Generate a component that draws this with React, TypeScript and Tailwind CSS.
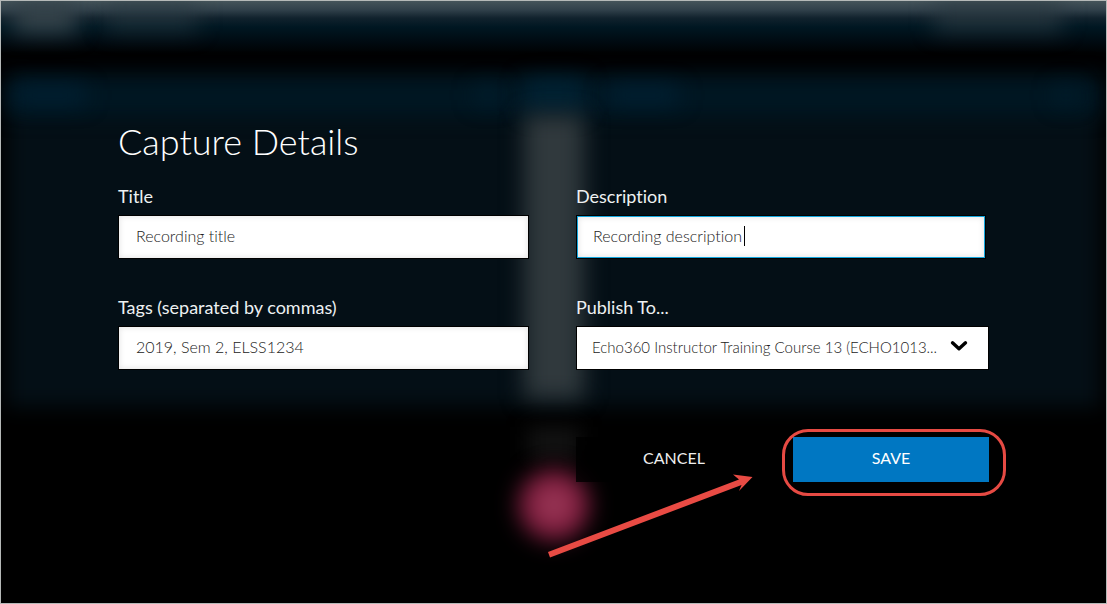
import { useState } from "react";
import type { FormEvent, ReactNode } from "react";

const COURSES = ["Echo360 Instructor Training Course 13 (ECHO1013..."];

const inputClass =
  "block h-[44px] w-full max-w-[411px] border border-black bg-white px-[17px] pb-[3px] text-base font-light text-[#222] shadow-[inset_0_0_6px_rgba(0,0,0,0.12)] outline-none";

function Field({ id, label, children }: { id: string; label: string; children: ReactNode }) {
  return (
    <div>
      <label htmlFor={id} className="mb-2 block text-lg leading-[22px] text-[#eef1f2]">
        {label}
      </label>
      {children}
    </div>
  );
}

// Dimmed and blurred capture screen that sits behind the form
function Backdrop() {
  return (
    <div aria-hidden="true" className="absolute inset-0 flex flex-col overflow-hidden">
      <div className="flex h-[74px] items-start gap-7 bg-[linear-gradient(to_bottom,#45545a_0px,#30404a_9px,#11222d_17px,#001722_26px,#000b12_40px,#000203_52px,#000203_66px)] px-3">
        <div className="h-[32px] w-[64px] bg-[#35434a] blur-[11px]" />
        <div className="h-[30px] w-[92px] bg-[#2a3a42]/60 blur-[11px]" />
        <div className="mr-8 ml-auto h-[30px] w-[128px] bg-[#2b3a42]/75 blur-[11px]" />
      </div>
      <div className="relative mx-[6px] grid h-[332px] grid-cols-[1fr_60px_1fr] grid-rows-[40px_1fr]">
        <div className="absolute inset-0 bg-[#040f16] blur-[10px]" />
        <div className="col-span-3 col-start-1 row-start-1 mt-1 bg-[#001723] blur-[10px]" />
        <div className="relative col-start-1 row-start-1 flex items-center justify-between px-2 blur-[11px]">
          <div className="h-4 w-[70px] bg-[#002236]" />
          <div className="mr-4 h-4 w-6 bg-[#002030]" />
        </div>
        <div className="relative col-start-2 row-start-1 my-1 bg-[#002233] blur-[11px]" />
        <div className="relative col-start-3 row-start-1 flex items-center justify-between px-6 blur-[11px]">
          <div className="h-4 w-[70px] bg-[#002236]" />
          <div className="h-4 w-5 bg-[#002030]" />
        </div>
        <div className="relative col-start-2 row-start-2 mb-2 bg-[#30393d] blur-[11px]" />
      </div>
      <div className="mx-auto mt-5 h-8 w-[52px] bg-[#121212] blur-[10px]" />
      <div className="mx-auto mt-[10px] h-[72px] w-[72px] rounded-full bg-[radial-gradient(closest-side,#a54c66_0%,#8c2648_45%,#761838_100%)] blur-[11px]" />
    </div>
  );
}

export default function App() {
  const [title, setTitle] = useState("Recording title");
  const [description, setDescription] = useState("Recording description");
  const [tags, setTags] = useState("2019, Sem 2, ELSS1234");
  const [course, setCourse] = useState(COURSES[0]);

  const onSubmit = (e: FormEvent) => e.preventDefault();

  return (
    <div className="relative min-h-screen border border-[#b5b9b8] bg-black font-['Lato',sans-serif] [font-variant-ligatures:none]">
      <Backdrop />
      <form onSubmit={onSubmit} className="relative px-[117px] pt-[118px] pb-16">
        <h1 className="text-[36px] leading-[44px] font-light text-white">Capture Details</h1>

        <div className="mt-[22px] grid grid-cols-2 gap-x-[45px] gap-y-[37px]">
          <Field id="title" label="Title">
            <input
              id="title"
              type="text"
              value={title}
              onChange={(e) => setTitle(e.target.value)}
              className={inputClass}
            />
          </Field>
          <Field id="description" label="Description">
            <div className="relative max-w-[410px] border border-black">
              <input
                id="description"
                type="text"
                value={description}
                onChange={(e) => setDescription(e.target.value)}
                className="block h-[42px] w-full border border-[#12a5dc] bg-white px-[15px] pb-[3px] text-base font-light text-[#222] caret-transparent shadow-[inset_0_0_6px_rgba(0,0,0,0.12)] outline-none"
              />
              <span className="absolute top-[10px] left-[167px] h-5 w-px bg-black" />
            </div>
          </Field>
          <Field id="tags" label="Tags (separated by commas)">
            <input
              id="tags"
              type="text"
              value={tags}
              onChange={(e) => setTags(e.target.value)}
              className={inputClass}
            />
          </Field>
          <Field id="publish" label="Publish To...">
            <div className="relative">
              <select
                id="publish"
                value={course}
                onChange={(e) => setCourse(e.target.value)}
                className="block h-[44px] w-full appearance-none border border-black bg-white pr-10 pb-[2px] pl-[15px] text-[15px] font-light text-[#222] outline-none"
              >
                {COURSES.map((c) => (
                  <option key={c}>{c}</option>
                ))}
              </select>
              <svg
                viewBox="0 0 18 12"
                className="pointer-events-none absolute top-[14px] right-[21px] h-3 w-[18px]"
                fill="none"
                stroke="#000"
                strokeWidth="3.4"
                strokeLinecap="round"
                strokeLinejoin="round"
              >
                <path d="M2.5 2.8 9 8.8l6.500-6" />
              </svg>
            </div>
          </Field>

          <div className="relative col-start-2 mt-[30px] flex gap-[21px]">
            <button type="button" className="h-[45px] flex-1 bg-black/80 pb-[3px] text-base text-[#eee]">
              CANCEL
            </button>
            <div className="relative flex flex-1">
              <button type="submit" className="h-[45px] flex-1 bg-[#0077c2] pb-[3px] text-base text-white">
                SAVE
              </button>
              <div className="pointer-events-none absolute -top-2 -right-[17px] -bottom-[14px] -left-[11px] rounded-[26px] border-3 border-[#e64a43]" />
            </div>
            <svg
              viewBox="0 0 210 90"
              className="pointer-events-none absolute top-[33px] -left-7 h-[90px] w-[210px]"
            >
              <path
                d="M0 82 191 9.500 185 4.600 204.500 7 191 21 193.500 15 2 87.500Z"
                fill="#e94b44"
              />
            </svg>
          </div>
        </div>
      </form>
    </div>
  );
}
